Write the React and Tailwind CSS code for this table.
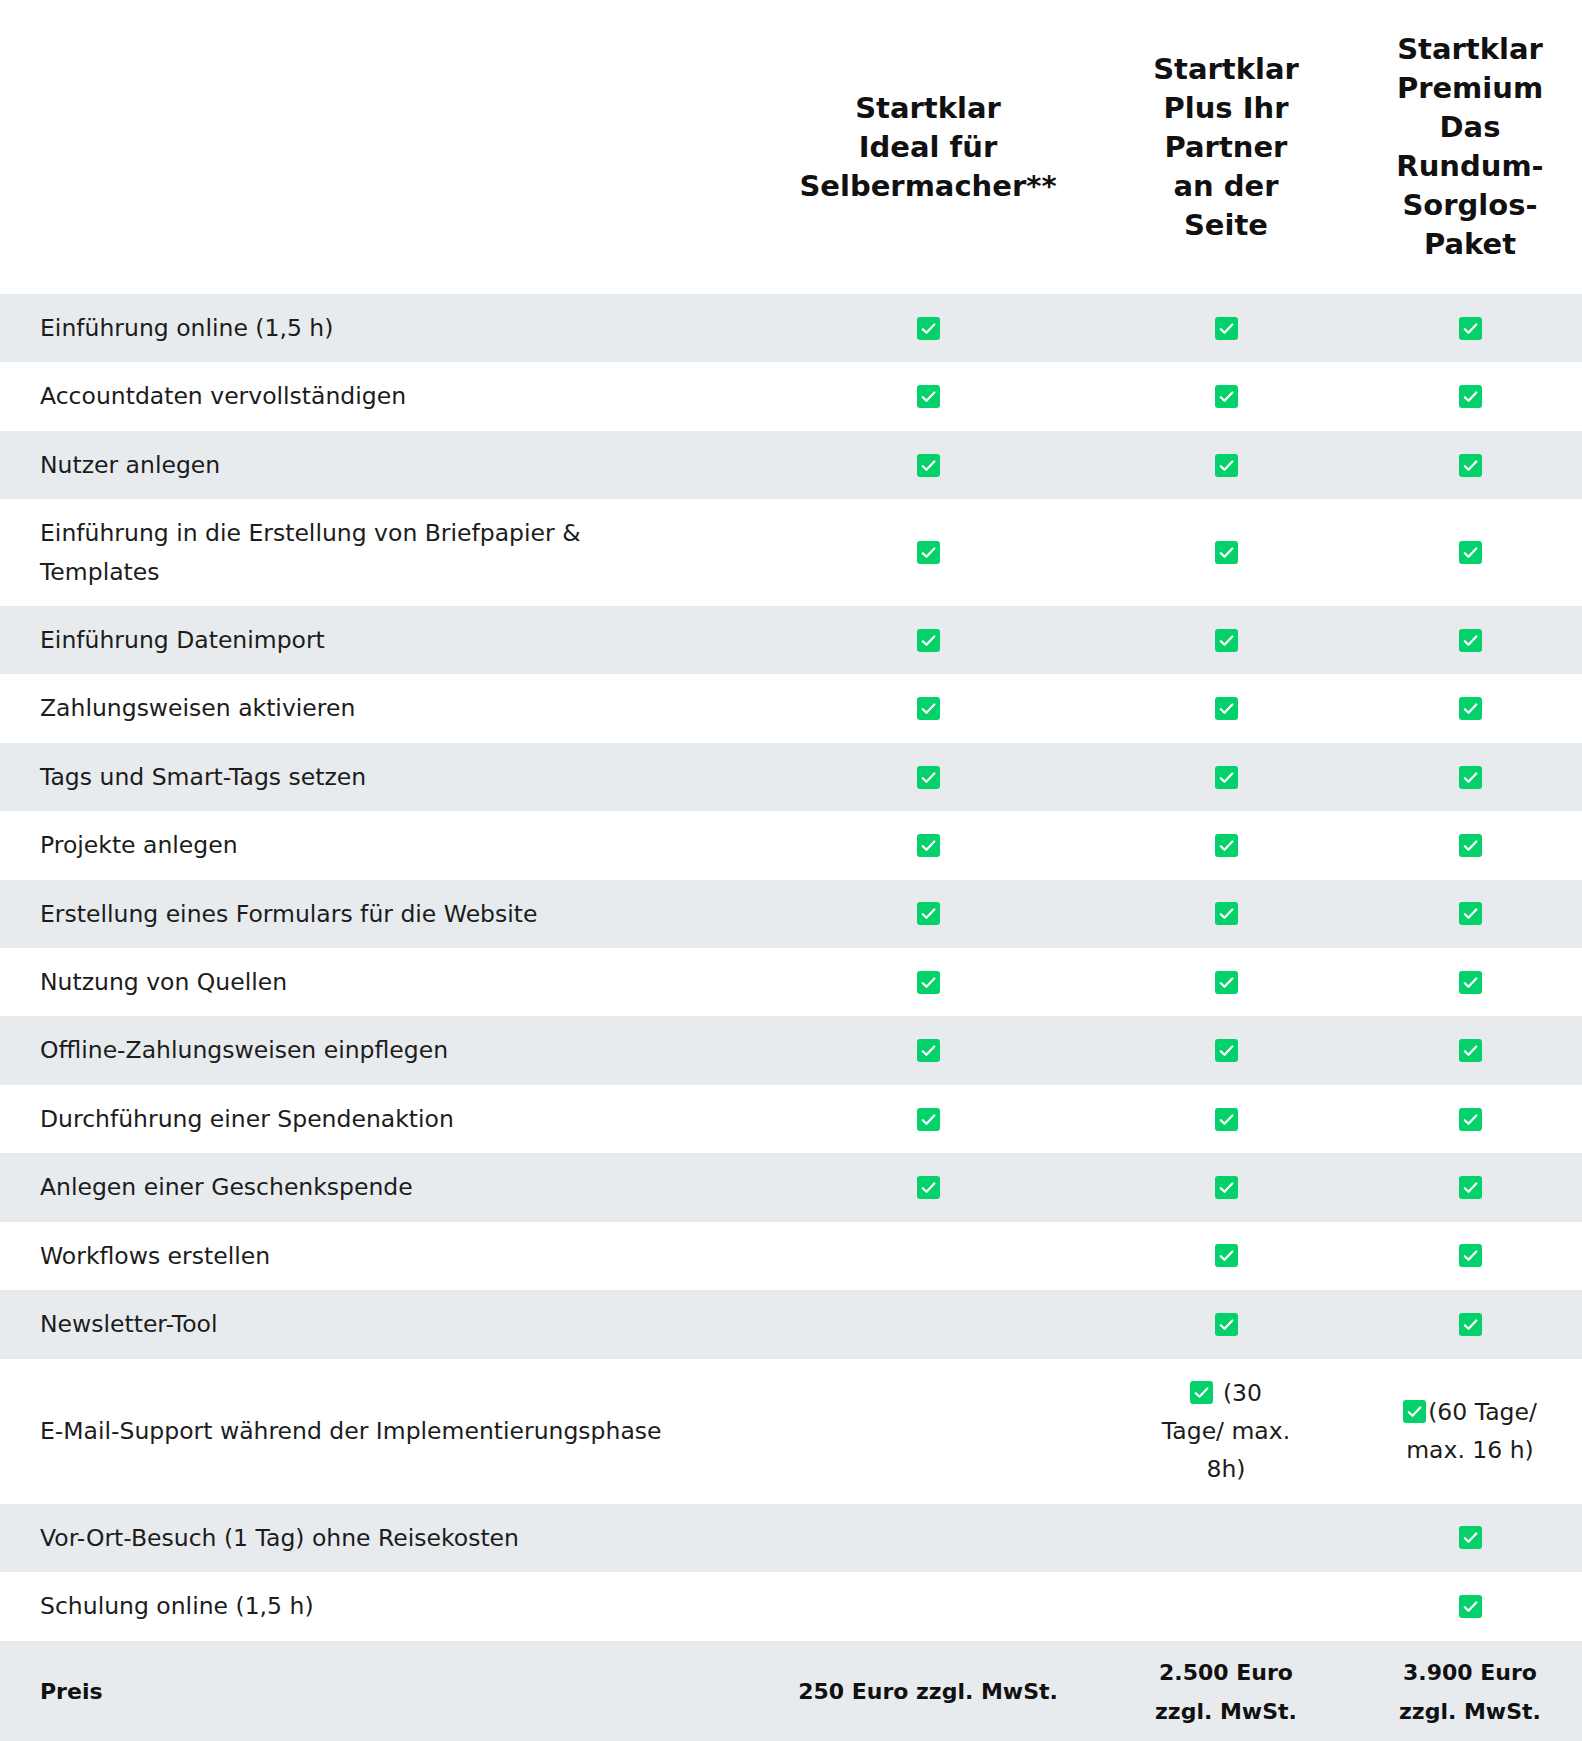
import React from 'react';

const Check = ({ className = '' }) => (
    <svg viewBox="0 0 23 23" className={`h-[23px] w-[23px] shrink-0 ${className}`} aria-hidden="true">
        <rect x="0" y="0" width="23" height="23" rx="3" fill="#05d16a" />
        <path d="M5.8 12.2l3.7 3.6 7.8-8.3" fill="none" stroke="#fff" strokeWidth="2.3" strokeLinecap="round" strokeLinejoin="round" />
    </svg>
);

const Y = true;
const N = false;

const features = [
    ['Einführung online (1,5 h)', Y, Y, Y],
    ['Accountdaten vervollständigen', Y, Y, Y],
    ['Nutzer anlegen', Y, Y, Y],
    [<>Einführung in die Erstellung von Briefpapier &amp;<br />Templates</>, Y, Y, Y],
    ['Einführung Datenimport', Y, Y, Y],
    ['Zahlungsweisen aktivieren', Y, Y, Y],
    ['Tags und Smart-Tags setzen', Y, Y, Y],
    ['Projekte anlegen', Y, Y, Y],
    ['Erstellung eines Formulars für die Website', Y, Y, Y],
    ['Nutzung von Quellen', Y, Y, Y],
    ['Offline-Zahlungsweisen einpflegen', Y, Y, Y],
    ['Durchführung einer Spendenaktion', Y, Y, Y],
    ['Anlegen einer Geschenkspende', Y, Y, Y],
    ['Workflows erstellen', N, Y, Y],
    ['Newsletter-Tool', N, Y, Y],
    [
        'E-Mail-Support während der Implementierungsphase',
        N,
        <><Check className="mr-[10px] inline-block align-[-3px]" />(30<br />Tage/ max.<br />8h)</>,
        <><Check className="mr-[2px] inline-block align-[-3px]" />(60 Tage/<br />max. 16 h)</>,
    ],
    ['Vor-Ort-Besuch (1 Tag) ohne Reisekosten', N, N, Y],
    ['Schulung online (1,5 h)', N, N, Y],
];

const Cell = ({ value }) => {
    if (value === true) {
        return (
            <td className="py-[15px] align-middle">
                <div className="flex justify-center"><Check /></div>
            </td>
        );
    }
    if (value === false) return <td className="py-[15px]" />;
    return <td className="px-2 py-[15px] text-center align-middle">{value}</td>;
};

export default function App() {
    return (
        <div className="w-[1582px] bg-white font-['DejaVu_Sans',sans-serif] text-[#1c1c1c]">
            <table className="w-full table-fixed border-collapse">
                <colgroup>
                    <col className="w-[762px]" />
                    <col className="w-[332px]" />
                    <col className="w-[264px]" />
                    <col className="w-[224px]" />
                </colgroup>
                <thead>
                    <tr className="h-[294px] text-[29px] font-bold leading-[39px] text-[#111]">
                        <th />
                        <th className="px-2 text-center align-middle">Startklar<br />Ideal für<br />Selbermacher**</th>
                        <th className="px-2 text-center align-middle">Startklar<br />Plus Ihr<br />Partner<br />an der<br />Seite</th>
                        <th className="px-2 text-center align-middle">Startklar<br />Premium<br />Das<br />Rundum-<br />Sorglos-<br />Paket</th>
                    </tr>
                </thead>
                <tbody className="text-[23.5px] leading-[38.4px]">
                    {features.map(([label, a, b, c], i) => (
                        <tr key={i} className={i % 2 === 0 ? 'bg-[#e8ebee]' : 'bg-white'}>
                            <td className="py-[15px] pl-10 pr-4 text-left align-middle">{label}</td>
                            <Cell value={a} />
                            <Cell value={b} />
                            <Cell value={c} />
                        </tr>
                    ))}
                    <tr className="bg-[#e8ebee] text-[22px] font-bold leading-[39px] text-[#111]">
                        <td className="pb-[10px] pl-10 pt-[12px] text-left align-middle">Preis</td>
                        <td className="px-2 pb-[10px] pt-[12px] text-center align-middle">250 Euro zzgl. MwSt.</td>
                        <td className="px-2 pb-[10px] pt-[12px] text-center align-middle">2.500 Euro<br />zzgl. MwSt.</td>
                        <td className="px-2 pb-[10px] pt-[12px] text-center align-middle">3.900 Euro<br />zzgl. MwSt.</td>
                    </tr>
                </tbody>
            </table>
        </div>
    );
}
